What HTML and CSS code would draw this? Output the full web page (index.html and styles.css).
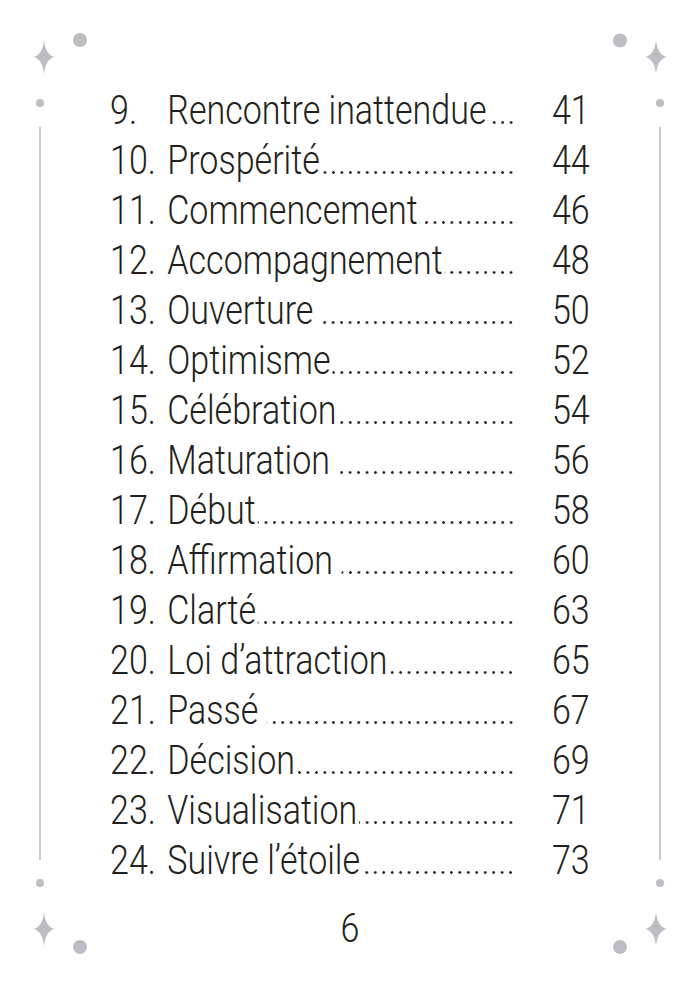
FILE: index.html
```html
<!DOCTYPE html>
<html lang="fr">
<head>
<meta charset="utf-8">
<title>Sommaire</title>
<link rel="stylesheet" href="styles.css">
</head>
<body>
<div class="page">
  <div class="rail rail-left">
    <svg class="orn-top" width="100" height="127" viewBox="0 0 100 127">
      <path class="orn" d="M44 40 Q45.6 55.4 55 57 Q45.6 58.6 44 74 Q42.4 58.6 33 57 Q42.4 55.4 44 40 Z"/>
      <circle class="orn" cx="80" cy="40" r="7"/>
      <circle class="orn" cx="40" cy="103" r="4"/>
    </svg>
    <div class="line"></div>
    <svg class="orn-bottom" width="100" height="129" viewBox="0 0 100 129">
      <circle class="orn" cx="40" cy="23" r="4"/>
      <path class="orn" d="M44 52 Q45.6 67.4 55 69 Q45.6 70.6 44 86 Q42.4 70.6 33 69 Q42.4 67.4 44 52 Z"/>
      <circle class="orn" cx="80" cy="87" r="7"/>
    </svg>
  </div>

  <main class="content">
    <ol class="toc">
      <li class="row"><span class="num">9.</span><span class="title">Rencontre inattendue</span><span class="leader"></span><span class="pg">41</span></li>
      <li class="row"><span class="num">10.</span><span class="title">Prospérité</span><span class="leader"></span><span class="pg">44</span></li>
      <li class="row"><span class="num">11.</span><span class="title">Commencement</span><span class="leader"></span><span class="pg">46</span></li>
      <li class="row"><span class="num">12.</span><span class="title">Accompagnement</span><span class="leader"></span><span class="pg">48</span></li>
      <li class="row"><span class="num">13.</span><span class="title">Ouverture</span><span class="leader spaced"></span><span class="pg">50</span></li>
      <li class="row"><span class="num">14.</span><span class="title">Optimisme</span><span class="leader"></span><span class="pg">52</span></li>
      <li class="row"><span class="num">15.</span><span class="title">Célébration</span><span class="leader"></span><span class="pg">54</span></li>
      <li class="row"><span class="num">16.</span><span class="title">Maturation</span><span class="leader spaced"></span><span class="pg">56</span></li>
      <li class="row"><span class="num">17.</span><span class="title">Début</span><span class="leader"></span><span class="pg">58</span></li>
      <li class="row"><span class="num">18.</span><span class="title">Affirmation</span><span class="leader spaced"></span><span class="pg">60</span></li>
      <li class="row"><span class="num">19.</span><span class="title">Clarté</span><span class="leader"></span><span class="pg">63</span></li>
      <li class="row"><span class="num">20.</span><span class="title">Loi d’attraction</span><span class="leader"></span><span class="pg">65</span></li>
      <li class="row"><span class="num">21.</span><span class="title">Passé</span><span class="leader spaced"></span><span class="pg">67</span></li>
      <li class="row"><span class="num">22.</span><span class="title">Décision</span><span class="leader"></span><span class="pg">69</span></li>
      <li class="row"><span class="num">23.</span><span class="title">Visualisation</span><span class="leader"></span><span class="pg">71</span></li>
      <li class="row"><span class="num">24.</span><span class="title">Suivre l’étoile</span><span class="leader"></span><span class="pg">73</span></li>
    </ol>
    <div class="folio">6</div>
  </main>

  <div class="rail rail-right">
    <svg class="orn-top" width="100" height="127" viewBox="0 0 100 127">
      <circle class="orn" cx="20" cy="40.5" r="7"/>
      <path class="orn" d="M56 40 Q57.6 55.4 67 57 Q57.6 58.6 56 74 Q54.4 58.6 45 57 Q54.4 55.4 56 40 Z"/>
      <circle class="orn" cx="60" cy="103" r="4"/>
    </svg>
    <div class="line"></div>
    <svg class="orn-bottom" width="100" height="129" viewBox="0 0 100 129">
      <circle class="orn" cx="60" cy="23" r="4"/>
      <path class="orn" d="M56 52 Q57.6 67.4 67 69 Q57.6 70.6 56 86 Q54.4 70.6 45 69 Q54.4 67.4 56 52 Z"/>
      <circle class="orn" cx="20" cy="87" r="7"/>
    </svg>
  </div>
</div>
</body>
</html>
```

FILE: styles.css
```css
html, body {
  margin: 0;
  padding: 0;
  background: #ffffff;
}

.page {
  display: flex;
  width: 700px;
  height: 989px;
  overflow: hidden;
  color: #231f20;
  font-family: Roboto, "Liberation Sans", sans-serif;
  font-weight: 300;
}

.rail {
  width: 100px;
  flex: 0 0 100px;
  display: flex;
  flex-direction: column;
}

.rail svg {
  display: block;
  flex: 0 0 auto;
}

.orn {
  fill: #bdbdc4;
}

.line {
  flex: 1 1 auto;
  width: 2px;
  background: #cbcbcf;
}

.rail-left .line {
  margin-left: 39px;
}

.rail-right .line {
  margin-left: 59px;
}

.content {
  flex: 0 0 500px;
  width: 500px;
  min-width: 0;
  padding-top: 85px;
  padding-left: 10px;
  box-sizing: border-box;
}

.toc {
  list-style: none;
  margin: 0;
  padding: 0;
  width: 578px;
  transform: scaleX(0.83);
  transform-origin: 0 0;
}

.row {
  display: flex;
  height: 50px;
  font-size: 41px;
  line-height: 50px;
}

.num {
  flex: 0 0 69px;
  white-space: nowrap;
}

.title {
  white-space: nowrap;
}

.leader {
  flex: 1 1 auto;
  margin-left: 2px;
  background-image: radial-gradient(1.9px 1.5px at 50% 37.5px, #2a2627 75%, rgba(42, 38, 39, 0) 100%);
  background-size: 10.2px 50px;
  background-repeat: repeat-x;
  background-position: right top;
}

.leader.spaced {
  margin-left: 10px;
}

.pg {
  flex: 0 0 90px;
  text-align: right;
}

.folio {
  margin-top: 18px;
  margin-left: -10px;
  font-size: 41px;
  line-height: 50px;
  text-align: center;
  transform: scaleX(0.83);
}
```
